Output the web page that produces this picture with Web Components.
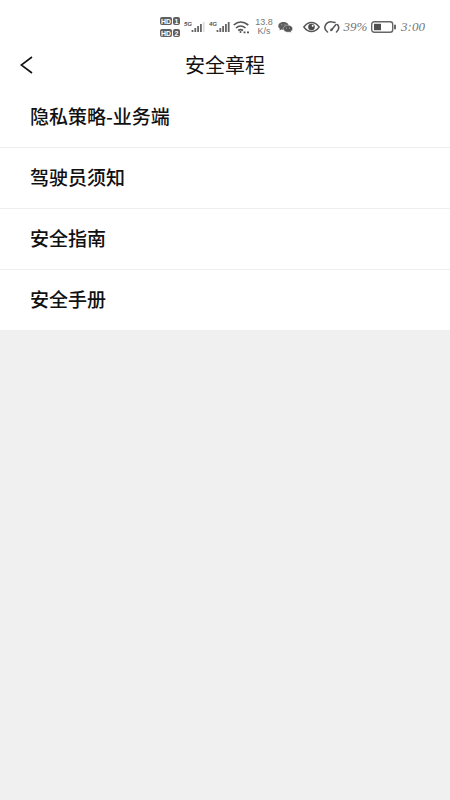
<!DOCTYPE html>
<html lang="zh-CN">
<head>
<meta charset="utf-8">
<meta name="viewport" content="width=device-width, initial-scale=1">
<title>安全章程</title>
<style>
  body {
    margin: 0;
    background: #f0f0f0;
    color: #111;
    font-family: "Liberation Sans", "Noto Sans CJK SC", sans-serif;
  }
</style>
</head>
<body>
<safety-page></safety-page>

<script>
class StatusBar extends HTMLElement {
  constructor() {
    super();
    this.attachShadow({ mode: "open" });
  }

  static get styles() {
    return `
    :host {
      display: flex;
      justify-content: flex-end;
      align-items: center;
      height: 32px;
      padding: 11px 25px 0 0;
      background: #fff;
      color: #777;
    }
    svg {
      display: block;
      flex: none;
    }
    svg text {
      font-family: "Liberation Sans", sans-serif;
      font-weight: bold;
    }
    .signal {
      margin-left: 4px;
    }
    .wifi {
      margin-left: 3px;
    }
    .speed {
      width: 20px;
      margin-left: 4px;
      font: 9px/9px "Liberation Sans", sans-serif;
      text-align: center;
    }
    .wechat {
      margin-left: 4px;
    }
    .eye {
      margin-left: 10px;
    }
    .gauge {
      margin-left: 4px;
    }
    .hand {
      font: italic 13px/16px "Liberation Serif", serif;
      text-align: center;
    }
    .percent {
      width: 27px;
      margin-left: 2px;
    }
    .battery {
      margin-left: 2px;
    }
    .time {
      width: 24px;
      margin-left: 4px;
    }
    `;
  }

  connectedCallback() {
    this.render();
  }

  signal(label) {
    return `
    <svg class="signal" width="21" height="16" viewBox="0 0 21 16">
      <text x="0" y="7" font-size="6" font-style="italic" fill="#555">${label}</text>
      <path d="M8.5 13v-2M11.3 13v-4M14.1 13v-6M16.9 13v-8" stroke="#666" stroke-width="1.8"/>
      <path d="M19.7 13v-10" stroke="${label === "5G" ? "#ddd" : "#666"}" stroke-width="1.8"/>
    </svg>`;
  }

  render() {
    this.shadowRoot.innerHTML = `
    <style>${StatusBar.styles}</style>
    <svg width="20" height="20" viewBox="0 0 20 20">
      <g fill="#606060">
        <rect y="0" width="12" height="8" rx="2"/>
        <rect x="13" y="0" width="7" height="8" rx="2"/>
        <rect y="12" width="12" height="8" rx="2"/>
        <rect x="13" y="12" width="7" height="8" rx="2"/>
      </g>
      <g fill="#fff" font-size="7" text-anchor="middle">
        <text x="6" y="6.5">HD</text>
        <text x="16.5" y="6.5">1</text>
        <text x="6" y="18.5">HD</text>
        <text x="16.5" y="18.5">2</text>
      </g>
    </svg>
    ${this.signal("5G")}
    ${this.signal("4G")}
    <svg class="wifi" width="17" height="14" viewBox="0 0 17 14" fill="none" stroke="#555" stroke-width="1.6">
      <path d="M.7 5Q7.5-1 15.3 5M3 8Q7.5 4 12.5 8M5.2 10.5Q7.5 8.7 10 10.5"/>
      <circle cx="7.5" cy="12" r="1" fill="#555" stroke="none"/>
      <path d="M10.5 12.3h2M14 12.3h2" stroke-width="1.8"/>
    </svg>
    <div class="speed">13.8<br>K/s</div>
    <svg class="wechat" width="15" height="12" viewBox="0 0 15 12">
      <path d="M5.5 1C2.5 1 .3 2.7.3 4.9c0 1.2.6 2.2 1.6 2.9l-.4 1.7 1.9-.9 2.1.2c3 0 5.2-1.7 5.2-3.9S8.5 1 5.5 1z" fill="#5e5e5e"/>
      <path d="M10 4.2c-2.600 0-4.600 1.500-4.600 3.500s2 3.500 4.600 3.500l1.500-.2 1.700.8-.3-1.500c1.100-.7 1.700-1.500 1.700-2.600 0-2-2-3.500-4.600-3.500z" fill="#555" stroke="#fff" stroke-width=".4"/>
      <g fill="#ccc"><circle cx="3.8" cy="3.7" r=".5"/><circle cx="7" cy="3.7" r=".5"/><circle cx="8.5" cy="7" r=".5"/><circle cx="11.5" cy="7" r=".5"/></g>
    </svg>
    <svg class="eye" width="17" height="12" viewBox="0 0 17 12">
      <path d="M.8 6Q4 1.5 8.5 1.5T16.2 6Q13 10.5 8.5 10.5T.8 6z" fill="none" stroke="#555" stroke-width="1.3"/>
      <circle cx="8.5" cy="6" r="3.3" fill="#4c4c4c"/>
      <circle cx="9.7" cy="4.8" r="1" fill="#fff"/>
    </svg>
    <svg class="gauge" width="16" height="12" viewBox="0 0 16 12" fill="none" stroke="#555" stroke-width="1.5" stroke-linecap="round">
      <path d="M3.5 11Q-.5 8 1.5 4.2T8 .9q1.5 0 3 .6M13.5 3.5Q16.5 7.5 12.5 11M7 9.5l5-6"/>
      <circle cx="7.5" cy="8.8" r="1.2" fill="#555" stroke="none"/>
    </svg>
    <div class="hand percent">39%</div>
    <svg class="battery" width="26" height="12" viewBox="0 0 26 12">
      <rect x=".7" y=".7" width="21" height="10.6" rx="2.5" fill="#fff" stroke="#666" stroke-width="1.4"/>
      <rect x="3" y="2.8" width="7" height="6.4" fill="#505050"/>
      <rect x="23" y="3.5" width="2" height="5" rx="1" fill="#666"/>
    </svg>
    <time class="hand time">3:00</time>`;
  }
}

class NavHeader extends HTMLElement {
  constructor() {
    super();
    this.attachShadow({ mode: "open" });
  }

  static get styles() {
    return `
    :host {
      display: grid;
      grid-template-columns: 52px 1fr 52px;
      align-items: center;
      height: 44px;
      background: #fff;
    }
    button {
      height: 44px;
      padding: 0 0 0 20px;
      border: 0;
      background: none;
      color: inherit;
      cursor: pointer;
    }
    svg {
      display: block;
    }
    h1 {
      margin: 0;
      font: 400 20px/24px "Noto Sans CJK SC", sans-serif;
      text-align: center;
    }
    `;
  }

  connectedCallback() {
    this.render();
  }

  render() {
    this.shadowRoot.innerHTML = `
    <style>${NavHeader.styles}</style>
    <button type="button" aria-label="返回">
      <svg width="13" height="18" viewBox="0 0 13 18" fill="none" stroke="currentColor" stroke-width="1.6">
        <path d="M12 1L1.2 9 12 17"/>
      </svg>
    </button>
    <h1><slot></slot></h1>`;
  }
}

class MenuItem extends HTMLElement {
  constructor() {
    super();
    this.attachShadow({ mode: "open" });
  }

  static get styles() {
    return `
    :host {
      display: block;
      border-bottom: 1px solid #eee;
      background: #fff;
    }
    a {
      display: block;
      padding: 17px 30px 19px;
      color: inherit;
      font: 500 19px/24px "Noto Sans CJK SC", sans-serif;
      text-decoration: none;
    }
    `;
  }

  connectedCallback() {
    this.render();
  }

  render() {
    this.shadowRoot.innerHTML = `
    <style>${MenuItem.styles}</style>
    <a href="#"><slot></slot></a>`;
  }
}

class SafetyPage extends HTMLElement {
  constructor() {
    super();
    this.attachShadow({ mode: "open" });
  }

  static get styles() {
    return `
    :host {
      display: block;
    }
    `;
  }

  connectedCallback() {
    this.render();
  }

  render() {
    this.shadowRoot.innerHTML = `
    <style>${SafetyPage.styles}</style>
    <status-bar></status-bar>
    <nav-header>安全章程</nav-header>
    <main>
      <menu-item>隐私策略-业务端</menu-item>
      <menu-item>驾驶员须知</menu-item>
      <menu-item>安全指南</menu-item>
      <menu-item>安全手册</menu-item>
    </main>`;
  }
}

customElements.define("status-bar", StatusBar);
customElements.define("nav-header", NavHeader);
customElements.define("menu-item", MenuItem);
customElements.define("safety-page", SafetyPage);
</script>
</body>
</html>
